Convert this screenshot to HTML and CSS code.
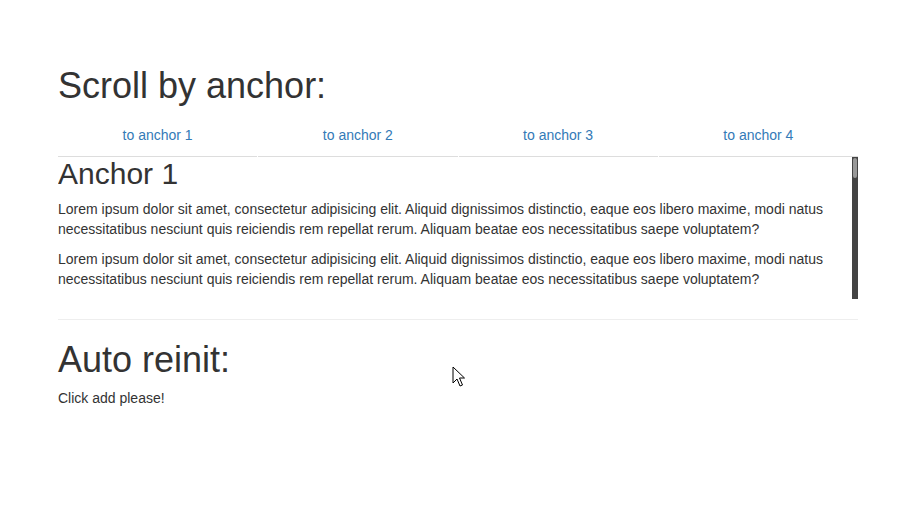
FILE: index.html
```html
<!DOCTYPE html>
<html>
<head>
<meta charset="utf-8">
<link rel="stylesheet" href="styles.css">
</head>
<body>
<div class="container">
  <h1 class="title">Scroll by anchor:</h1>
  <ul class="anchor-nav">
    <li><a href="#a1">to anchor 1</a></li>
    <li><a href="#a2">to anchor 2</a></li>
    <li><a href="#a3">to anchor 3</a></li>
    <li><a href="#a4">to anchor 4</a></li>
  </ul>
  <div class="scroll-box">
    <div class="scroll-content">
      <h2 class="anchor-title" id="a1">Anchor 1</h2>
      <p>Lorem ipsum dolor sit amet, consectetur adipisicing elit. Aliquid dignissimos distinctio, eaque eos libero maxime, modi natus necessitatibus nesciunt quis reiciendis rem repellat rerum. Aliquam beatae eos necessitatibus saepe voluptatem?</p>
      <p>Lorem ipsum dolor sit amet, consectetur adipisicing elit. Aliquid dignissimos distinctio, eaque eos libero maxime, modi natus necessitatibus nesciunt quis reiciendis rem repellat rerum. Aliquam beatae eos necessitatibus saepe voluptatem?</p>
    </div>
    <div class="scroll-rail"><div class="scroll-thumb"></div></div>
  </div>
  <hr class="divider">
  <h1 class="title">Auto reinit:</h1>
  <p>Click add please!</p>
</div>
<svg class="cursor" width="14" height="22" viewBox="0 0 14 22" xmlns="http://www.w3.org/2000/svg">
  <path d="M1 1 L1 17 L5 13 L8 20 L10.5 19 L7.5 12 L12.5 12 Z" fill="#fff" stroke="#000" stroke-width="1" stroke-linejoin="miter"/>
</svg>
</body>
</html>
```

FILE: styles.css
```css
html, body {
  margin: 0;
  padding: 0;
  background: #fff;
}
body {
  font-family: "Liberation Sans", Arial, sans-serif;
  font-size: 14px;
  line-height: 1.42857;
  color: #333;
}
.container {
  width: 800px;
  margin-left: 58px;
  padding-top: 66px;
}
.title {
  font-size: 36px;
  font-weight: 500;
  line-height: 1.1;
  margin: 20px 0 10px;
}
.container > .title:first-child {
  margin-top: 0;
}
.anchor-nav {
  list-style: none;
  margin: 0;
  padding: 0;
  display: grid;
  grid-template-columns: repeat(4, 1fr);
  column-gap: 1px;
}
.anchor-nav li {
  border-bottom: 1px solid #ddd;
  text-align: center;
}
.anchor-nav a {
  display: block;
  padding: 10px 15px;
  color: #337ab7;
  text-decoration: none;
}
.scroll-box {
  position: relative;
  height: 142px;
  overflow: hidden;
}
.anchor-title {
  font-size: 30px;
  font-weight: 500;
  line-height: 1.1;
  margin: 0 0 10px;
}
.scroll-content p {
  margin: 0 0 10px;
}
.scroll-rail {
  position: absolute;
  top: 0;
  right: 0;
  width: 6px;
  height: 142px;
  background: #444;
}
.scroll-thumb {
  margin: 1px auto 0;
  width: 4px;
  height: 20px;
  background: #999;
  border-radius: 2px;
}
.divider {
  margin: 20px 0;
  border: 0;
  border-top: 1px solid #eee;
}
p {
  margin: 0 0 10px;
}
.cursor {
  position: absolute;
  left: 452px;
  top: 366px;
}
```
